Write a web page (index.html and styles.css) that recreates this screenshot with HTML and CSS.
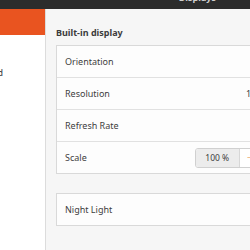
FILE: index.html
```html
<!DOCTYPE html>
<html lang="en">
<head>
    <meta charset="UTF-8">
    <title>Displays</title>
    <link rel="stylesheet" href="styles.css">
</head>
<body>

<div class="titlebar">
    <span class="title">Displays</span>
</div>

<div class="window">
    <!-- Sidebar -->
    <div class="sidebar">
        <div class="side-item active"></div>
        <div class="side-item"><span class="side-label">Background</span></div>
    </div>

    <!-- Main panel -->
    <div class="main">
        <h2>Built-in display</h2>

        <div class="card">
            <div class="row">Orientation</div>
            <div class="row">
                <span>Resolution</span>
                <span class="value">1920 × 1080 (16:9)</span>
            </div>
            <div class="row">Refresh Rate</div>
            <div class="row">
                <span>Scale</span>
                <div class="spin">
                    <span class="spin-entry">100 %</span>
                    <span class="spin-btn">−</span>
                </div>
            </div>
        </div>

        <div class="card night">
            <div class="row">Night Light</div>
        </div>
    </div>
</div>

</body>
</html>
```

FILE: styles.css
```css
html, body {
    margin: 0;
    width: 250px;
    height: 250px;
    overflow: hidden;
}

body {
    font-family: "Noto Sans", "DejaVu Sans", sans-serif;
    font-size: 9px;
    color: #3d3d3d;
    background-color: #f6f6f6;
}

.titlebar {
    height: 9px;
    background-color: #2c2c2c;
    overflow: hidden;
    display: flex;
    justify-content: flex-end;
    padding-right: 34px;
}

.title {
    color: #cfcfcf;
    font-weight: bold;
    font-size: 9px;
    line-height: 9px;
    margin-top: -7px;
}

.window {
    display: flex;
    height: 241px;
}

.sidebar {
    width: 45px;
    flex-shrink: 0;
    background: white;
    border-right: 1px solid #dcdcdc;
}

.side-item {
    height: 26px;
    overflow: hidden;
    white-space: nowrap;
}

.side-item.active {
    background-color: #e95420;
}

.side-item + .side-item {
    height: 60px;
}

.side-label {
    display: block;
    margin-left: -51px;
    padding-top: 32px;
    line-height: 12px;
    font-size: 9.5px;
}

.main {
    flex: 1;
    padding-left: 10px;
    min-width: 0;
}

h2 {
    margin: 18px 0 6px 0;
    font-size: 9px;
    line-height: 12px;
    font-weight: bold;
    color: #3c3c3c;
}

.card {
    width: 300px;
    background: #fdfdfd;
    border: 1px solid #d9d9d9;
}

.row {
    height: 31px;
    display: flex;
    align-items: center;
    padding-left: 8px;
    border-bottom: 1px solid #e1e1e1;
    white-space: nowrap;
}

.row:last-child {
    border-bottom: none;
}

.value {
    margin-left: 136px;
}

.spin {
    display: flex;
    margin-left: 108px;
    height: 18px;
    border: 1px solid #d0d0d0;
    border-radius: 3px;
    overflow: hidden;
}

.spin-entry {
    width: 43px;
    background: #ececec;
    border-right: 1px solid #d7d7d7;
    display: flex;
    align-items: center;
    justify-content: center;
    font-size: 8.5px;
}

.spin-btn {
    width: 30px;
    background: white;
    color: #e9a060;
    display: flex;
    align-items: center;
    padding-left: 7px;
}

.night {
    margin-top: 19px;
}
```
